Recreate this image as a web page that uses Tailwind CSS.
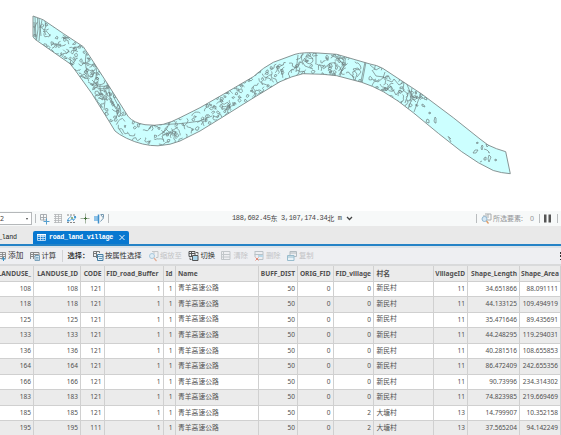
<!DOCTYPE html>
<html lang="zh">
<head>
<meta charset="utf-8">
<title>road_land_village</title>
<script src="https://cdn.jsdelivr.net/npm/@tailwindcss/browser@4"></script>
</head>
<body class="w-[561px] h-[435px] overflow-hidden bg-white font-['Noto_Sans','Noto_Sans_CJK_SC',sans-serif] text-[#505050]">
<div class="flex flex-col w-[561px] h-[435px] overflow-hidden">

  <!-- map -->
  <svg class="block w-[561px] h-[211px] shrink-0" viewBox="0 0 561 211">
    <defs><clipPath id="band"><path d="M33 16L43 19.7L63.3 33.5L83.3 46.7L90 56.7L108.3 85L128.3 116.7Q134 123 145 124.7Q155 126 163.3 124.3Q172 122 180 117.7L200 107.7L223.3 94.3L253.3 76.7Q264 67 273.3 62.3L295 54.3Q303 52 318 53L336.7 54.3L370 64Q377 65 383 68.5L421.7 94L453.3 117.7L480 139L488 145Q496 149 505.7 151.7L510.3 173.7Q501 173 493.3 170.500L478.3 162.7L461.7 151.7L438.3 133.3L413.3 112.7Q398 100 383.3 91.7Q373 86 361.7 82.3L336.7 75.7L323 74.3L303 73.7Q292 76 280 81.7L250 100L220 118.7L200 131L180 141Q171 145 158 145.8Q143 146 126.7 138.3Q118 134 115 131L108.3 120L91.7 93.3L75 70L70 63.7L35 39.3L33 36.7Z"/></clipPath></defs>
    <path fill="#ccffff" stroke="#7d8888" stroke-width=".9" d="M33 16L43 19.7L63.3 33.5L83.3 46.7L90 56.7L108.3 85L128.3 116.7Q134 123 145 124.7Q155 126 163.3 124.3Q172 122 180 117.7L200 107.7L223.3 94.3L253.3 76.7Q264 67 273.3 62.3L295 54.3Q303 52 318 53L336.7 54.3L370 64Q377 65 383 68.5L421.7 94L453.3 117.7L480 139L488 145Q496 149 505.7 151.7L510.3 173.7Q501 173 493.3 170.500L478.3 162.7L461.7 151.7L438.3 133.3L413.3 112.7Q398 100 383.3 91.7Q373 86 361.7 82.3L336.7 75.7L323 74.3L303 73.7Q292 76 280 81.7L250 100L220 118.7L200 131L180 141Q171 145 158 145.8Q143 146 126.7 138.3Q118 134 115 131L108.3 120L91.7 93.3L75 70L70 63.7L35 39.3L33 36.7Z"/>
    <g clip-path="url(#band)" fill="none" stroke="#6f8080" stroke-width=".7">
      <path id="parcels"/>
      <path d="M35 17L36 39M37.500 18L38 29L36.500 40M39 18Q41 28 39 41M42 20Q39 29 41 36M45 21L46 26L44 31L46 35M34 22L35 36M86 54Q84 66 89 77M96 66Q98 77 92 86M88 82Q99 89 109 85M90 84Q101 92 109 87M92 80L98 86L92 90M112 88Q113 100 120 107L116 118M118 104Q123 112 119 117Q115 112 118 104M109 86Q108 98 116 109M102 94L105 101L104 110M98 98L108 100M163 124Q175 125 200 121L212 116M158 136L166 130L170 122M164 142L162 136L170 132L178 127M298 55L296 72M303 53Q299 58 305 66L313 69M316 53L316 63M306 56Q313 55 313 61Q310 66 306 62ZM331 55L339 59L344 66L339 75M346 64Q341 69 340 76M355 80L357 74L353 69L358 68L361 72L357 77M366 62L362 83M365 62L361 81M370 65L376 70L381 67M372 70L376 76L384 77L378 82L372 79M387 80L392 82L394 79L399 85L404 82L403 90L408 94L405 103M406 82Q411 91 411 101L408 109M412 88Q409 97 416 102M421 93L414 112M385 72L383 78L389 76M386 91L391 86L396 95L400 90"/>
      <path d="M424 98l2-1 1 3-3-1zM422 104l2 1 1 2-3-1zM429 112l2 1-2 1zM427 119l2 1v3l-3-1zM435 117l1 1v5h-1l-1-2zM448 136l2 4 1 2M449 137l2 2M476 143l2-1v1.500zM482 145l1 1-1 4-1-2zM486 144l3 1-2 2zM484 149l3 1 2 2M488 152l2 1M473 153l2-3h3l-2 3zM484 158l2-1v3h-2zM488 159l1-4 2 2-2 5zM495 159l2 1-2 1zM480 162l2-1"/>
    </g>
  </svg>

  <!-- map status bar -->
  <div class="flex items-center h-[15px] shrink-0 bg-[#f7f9f9] text-[7px]">
    <div class="flex items-center justify-between w-[32px] h-[13px] border border-l-0 border-[#b5b8ba] bg-white pr-[3px] text-[7px] leading-none text-[#444]"><span>2</span><span class="w-0 h-0 border-x-[1.5px] border-x-transparent border-t-2 border-t-[#444]"></span></div>
    <svg class="block w-[80px] h-[15px]" viewBox="32 0 80 15" fill="none">
      <path d="M35.500 3V12M108.500 3V12" stroke="#b9bcbe"/>
      <path d="M40.500 3.500h6v5.500h-6zM43.500 3.500v6M40.500 6.500h6" stroke="#a0a5a9" stroke-width=".9"/><path d="M46.500 7.500v6M43.500 10.500h6" stroke="#559fce"/>
      <path d="M54 3.500h8M54 5.500h8M54 7.500h8M54 9.500h8M54 11.500h8M55.500 3v9M58.500 3v9M61.500 3v9" stroke="#b2b5b7" stroke-width=".8"/>
      <path d="M67 4h9M67 11.500h9" stroke="#888" stroke-dasharray="2 1"/><path d="M68 8l3-2.500 3 3.500 2-3M69 10l3-2 2 2" stroke="#69b0e0"/><path d="M67 8.500h2v2h-2zM74 5h2v2h-2z" fill="#4c9ad0"/><path d="M71 6h2v2h-2z" fill="#8cb389"/>
      <path d="M85.500 2.500v10M80.500 7.500h9" stroke="#a5b5a2"/><path d="M84 7.500h3M85.500 6v3" stroke="#46723f"/>
      <path d="M94 5h4v5h-4z" fill="#8fc3e8"/><path d="M98.500 3.500v9" stroke="#3e8fca" stroke-width="1.500"/><path d="M100.500 3.500l3 3.500-3 3.500M101 3.500h2.500v3" stroke="#7598b0"/>
    </svg>
    <div class="ml-[120px] w-[110px] flex items-center whitespace-pre leading-none text-[#444] font-['Liberation_Mono','Noto_Sans_CJK_SC',monospace] text-[7px] tracking-[-0.35px]">188,602.45<span class="font-['Noto_Sans_CJK_SC']">东</span> 3,107,174.34<span class="font-['Noto_Sans_CJK_SC']">北</span> m</div>
    <svg class="block w-[14px] h-[15px]" viewBox="0 0 14 15"><path d="M5 6l2.500 2.500L10 6" fill="none" stroke="#444" stroke-width="1.300"/></svg>
    <svg class="block ml-[119px] w-[18px] h-[15px]" viewBox="475 0 18 15" fill="none"><path d="M476.500 3v9" stroke="#b9bcbe"/><path d="M485 3h6v6h-4M483 5h4M488 3v4" stroke="#a7abad"/><circle cx="484.500" cy="8" r="2.500" fill="#d6e8f4" stroke="#92b8d2"/><path d="M486.500 10l2 2.500" stroke="#dd9a62" stroke-width="1.300"/></svg>
    <div class="w-[44px] flex whitespace-nowrap leading-none text-[#929598] text-[7px]"><span class="w-[37px]">所选要素:</span><span>0</span></div>
    <svg class="block w-[24px] h-[15px]" viewBox="537 0 24 15"><path d="M539.500 3v9M557.500 3v9" stroke="#b9bcbe"/><path d="M544 3.500h2.500v8H544zM548.500 3.500h2.500v8h-2.500z" fill="#555"/></svg>
  </div>

  <!-- table tabs -->
  <div class="flex items-end h-[20px] shrink-0 bg-[#e9e9e9] border-b-2 border-[#2583c6] font-['Liberation_Mono',monospace] text-[6.7px] tracking-[-0.25px]">
    <div class="flex items-center w-[33px] h-[13px] leading-none text-[#222]"><span class="-ml-[2px]">_land</span></div>
    <div class="flex items-center w-[96px] h-[13px] rounded-t-[2px] bg-[#0878d0] text-white pl-[4px] leading-none">
      <svg class="block w-[12px] h-[13px]" viewBox="0 0 12 13"><path d="M.5 3.500h8v6H.5zM.5 5.500h8M.5 7.500h8M3.500 3.500v6M6 3.500v6" fill="none" stroke="#d5eafa" stroke-width=".8"/><path d="M0 3h9v1.500H0z" fill="#fff"/></svg>
      <span class="w-[70px] font-bold">road_land_village</span>
      <svg class="block w-[8px] h-[13px]" viewBox="0 0 8 13"><path d="M.5 4l5 5M5.500 4l-5 5" stroke="#fff" stroke-width=".9"/></svg>
    </div>
  </div>
  <div class="h-[2px] shrink-0 bg-[#dce3e8]"></div>

  <!-- table toolbar -->
  <div class="flex items-center h-[16px] shrink-0 bg-[#eeeff2] whitespace-nowrap leading-none text-[7.3px] text-[#333]">
    <div class="flex items-center w-[30px] text-[7.7px]"><svg class="block shrink-0 w-[8px] h-[12px]" viewBox="0 0 8 12" fill="none"><path d="M-3 2.500h8.500v6H-3M-3 4.500h8.500M-3 6.500h8.500M2.500 2v7" stroke="#888" stroke-width=".9"/><path d="M3.500 7v4M1.500 9h4" stroke="#3b91c5"/></svg>添加</div>
    <div class="flex items-center w-[32px]"><svg class="block shrink-0 w-[11.500px] h-[12px]" viewBox="0 0 11.500 12" fill="none"><path d="M.5 9V2.500h8.500V5M.5 4.500h8M.5 6.500h4M3.500 2v7" stroke="#888"/><path d="M5 5.500h4.500v5H5z" fill="#d7e9f4" stroke="#5f8fac" stroke-width=".8"/><path d="M6 7.500h2.500M6 9h2.500" stroke="#5f8fac" stroke-width=".7"/></svg>计算</div>
    <div class="w-px h-[12px] bg-[#d2d3d5]"></div>
    <div class="w-[30px] pl-[4.500px] font-medium text-[#222]">选择：</div>
    <div class="flex items-center w-[55px]"><svg class="block shrink-0 w-[12px] h-[12px]" viewBox="0 0 12 12" fill="none"><path d="M.5 7V1.500h6V3M.5 3.500h3M3.500 1v7M.5 6.500h3" stroke="#777"/><path d="M4.500 4.500h5.500v6H4.500z" fill="#e4f2fb" stroke="#447da3"/><path d="M4.500 6.500h5.500M6 8.500h3" stroke="#447da3" stroke-width=".8"/></svg>按属性选择</div>
    <div class="flex items-center w-[40px] text-[#c2c3c5]"><svg class="block shrink-0 w-[12px] h-[12px]" viewBox="0 0 12 12" fill="none"><path d="M4 1.500h6v6H8M6 1v3" stroke="#c3c6c8"/><circle cx="4" cy="6" r="2.500" fill="#e0edf5" stroke="#a8c8dd"/><path d="M6 8l2.500 3" stroke="#e2ac93" stroke-width="1.200"/></svg>缩放至</div>
    <div class="flex items-center w-[33px]"><svg class="block shrink-0 w-[12.500px] h-[12px]" viewBox="0 0 12.500 12" fill="none"><path d="M1 1.500h6v5H1zM1 3.500h6M3.500 1v5" stroke="#555"/><path d="M4.500 5.500H10v5H4.500z" fill="#a9d5ec" stroke="#555"/><path d="M8 2.500h2v2M3.500 9.500H2v-2" stroke="#555" stroke-width=".9"/></svg>切换</div>
    <div class="flex items-center w-[33px] text-[#c2c3c5]"><svg class="block shrink-0 w-[12.500px] h-[12px]" viewBox="0 0 12.500 12" fill="none"><path d="M.5 1.500h8.500v8H.5zM.5 4.500h8.500M.5 7h8.500M2.500 1.500v8" stroke="#c2c7ca"/></svg>清除</div>
    <div class="flex items-center w-[33px] text-[#c2c3c5]"><svg class="block shrink-0 w-[12px] h-[12px]" viewBox="0 0 12 12" fill="none"><path d="M1 1.500h8v8H4M.5 4.500h8.500M1 1v6" stroke="#bac2c7"/><path d="M4 5h5v2H4z" fill="#b9d8e8"/><path d="M1.500 7.500l3 3M4.500 7.500l-3 3" stroke="#e38a78"/></svg>删除</div>
    <div class="flex items-center w-[40px] text-[#c2c3c5]"><svg class="block shrink-0 w-[12px] h-[12px]" viewBox="0 0 12 12" fill="none"><path d="M3 1.500h6.500v5H3zM3 3h6.500" stroke="#b2bbc0"/><path d="M.5 5.500h6.500v5H.5z" fill="#e9f3f8" stroke="#98bccd"/><path d="M.5 7h6.500" stroke="#98bccd"/></svg>复制</div>
    <div class="ml-auto w-[1.500px] h-[8px] flex flex-col justify-between"><i class="block h-[1.500px] bg-[#333]"></i><i class="block h-[1.500px] bg-[#333]"></i><i class="block h-[1.500px] bg-[#333]"></i></div>
  </div>
  <div class="h-[2px] shrink-0 bg-[#d9dadb]"></div>

  <!-- attribute table -->
  <div id="table" class="flex flex-col shrink-0 text-[6.5px] leading-none whitespace-nowrap"></div>
</div>

<script>
// Small parcels scattered along the road corridor (centre x, centre y, half width, density).
const spine=[[34,28,10,6],[52,38,11,12],[75,55,11,16],[90,72,10,14],[104,95,10,11],[118,120,11,6],[138,133,10,8],[160,135,10,12],[180,129,10,8],[210,113,10,15],[235,99,10,11],[264,80,10,12],[286,69,10,7],[303,64,10,9],[325,64,10,18],[348,68,9,3],[375,77,10,8],[398,92,9,12],[419,104,9,0]];
let seed=73;
const rnd=()=>{seed=(seed*16807)%2147483647;return seed/2147483647;};
let d='';
for(let i=0;i<spine.length-1;i++){
  const [x,y,w,n]=spine[i],[x2,y2]=spine[i+1],len=Math.hypot(x2-x,y2-y);
  const count=Math.round(n*len/15);
  for(let k=0;k<count;k++){
    // Stratified positions keep the parcels evenly spread.
    const t=(k+rnd())/count,o=(((k*0.618+rnd()*.25)%1)*2-1)*w;
    const px=x+(x2-x)*t-(y2-y)/len*o,py=y+(y2-y)*t+(x2-x)/len*o;
    d+='M'+px.toFixed(1)+' '+py.toFixed(1);
    let a=rnd()*6.28;
    const open=rnd()<.5,steps=open?6:4;
    for(let s=0;s<steps;s++){
      a+=open?(rnd()-.5)*2.8:1.1+rnd()*.7;
      const r=1.1+rnd()*1.6;
      d+='l'+(Math.cos(a)*r).toFixed(1)+' '+(Math.sin(a)*r).toFixed(1);
    }
    if(!open)d+='z';
  }
}
document.getElementById('parcels').setAttribute('d',d);

const head=['LANDUSE_','LANDUSE_ID','CODE','FID_road_Buffer','Id','Name','BUFF_DIST','ORIG_FID','FID_village','村名','VillageID','Shape_Length','Shape_Area'];
const rows=[
[108,121,0,'新民村',11,'34.651866','88.091111'],
[118,121,0,'新民村',11,'44.133125','109.494919'],
[125,121,0,'新民村',11,'35.471646','89.435691'],
[133,121,0,'新民村',11,'44.248295','119.294031'],
[136,121,0,'新民村',11,'40.281516','108.655853'],
[164,121,0,'新民村',11,'86.472409','242.655356'],
[166,121,0,'新民村',11,'90.73996','234.314302'],
[183,121,0,'新民村',11,'74.823985','219.669469'],
[185,121,2,'大塘村',13,'14.799907','10.352158'],
[195,111,2,'大塘村',13,'37.565204','94.142249']];
const cols='grid grid-cols-[34px_47px_23.5px_59px_12px_83px_39.5px_35.500px_40.500px_60px_34px_52px_41px] shrink-0 border-b ';
const line=(cells,cls,header)=>'<div class="'+cols+cls+'">'+cells.map((c,i)=>{
  const left=i===5||i===9;
  const cjk=left&&!(header&&i===5);
  return '<div class="flex items-center min-w-0 border-r border-[#d0d0d0] '+(header?'pt-[2px] ':'')+(left?'justify-start pl-[2.5px] ':header&&i===3?'justify-end pr-[4px] ':header&&i===12?'justify-end pr-[1px] ':'justify-end pr-[2px] ')+(cjk?'text-[6.8px]':'')+'">'+c+'</div>';
}).join('')+'</div>';
let html=line(head,'h-[15.5px] bg-[#ebebeb] border-[#cfcfcf] font-bold text-[6.6px] text-[#505050]',true);
rows.forEach((r,i)=>{
  const [id,code,fv,name,vid,sl,sa]=r;
  html+=line([id,id,code,1,1,'青羊高速公路',50,0,fv,name,vid,sl,sa],'h-[15.55px] border-[#d0d0d0] '+(i%2?'bg-[#ebebeb]':'bg-white'),false);
});
document.getElementById('table').innerHTML=html;
</script>
</body>
</html>
